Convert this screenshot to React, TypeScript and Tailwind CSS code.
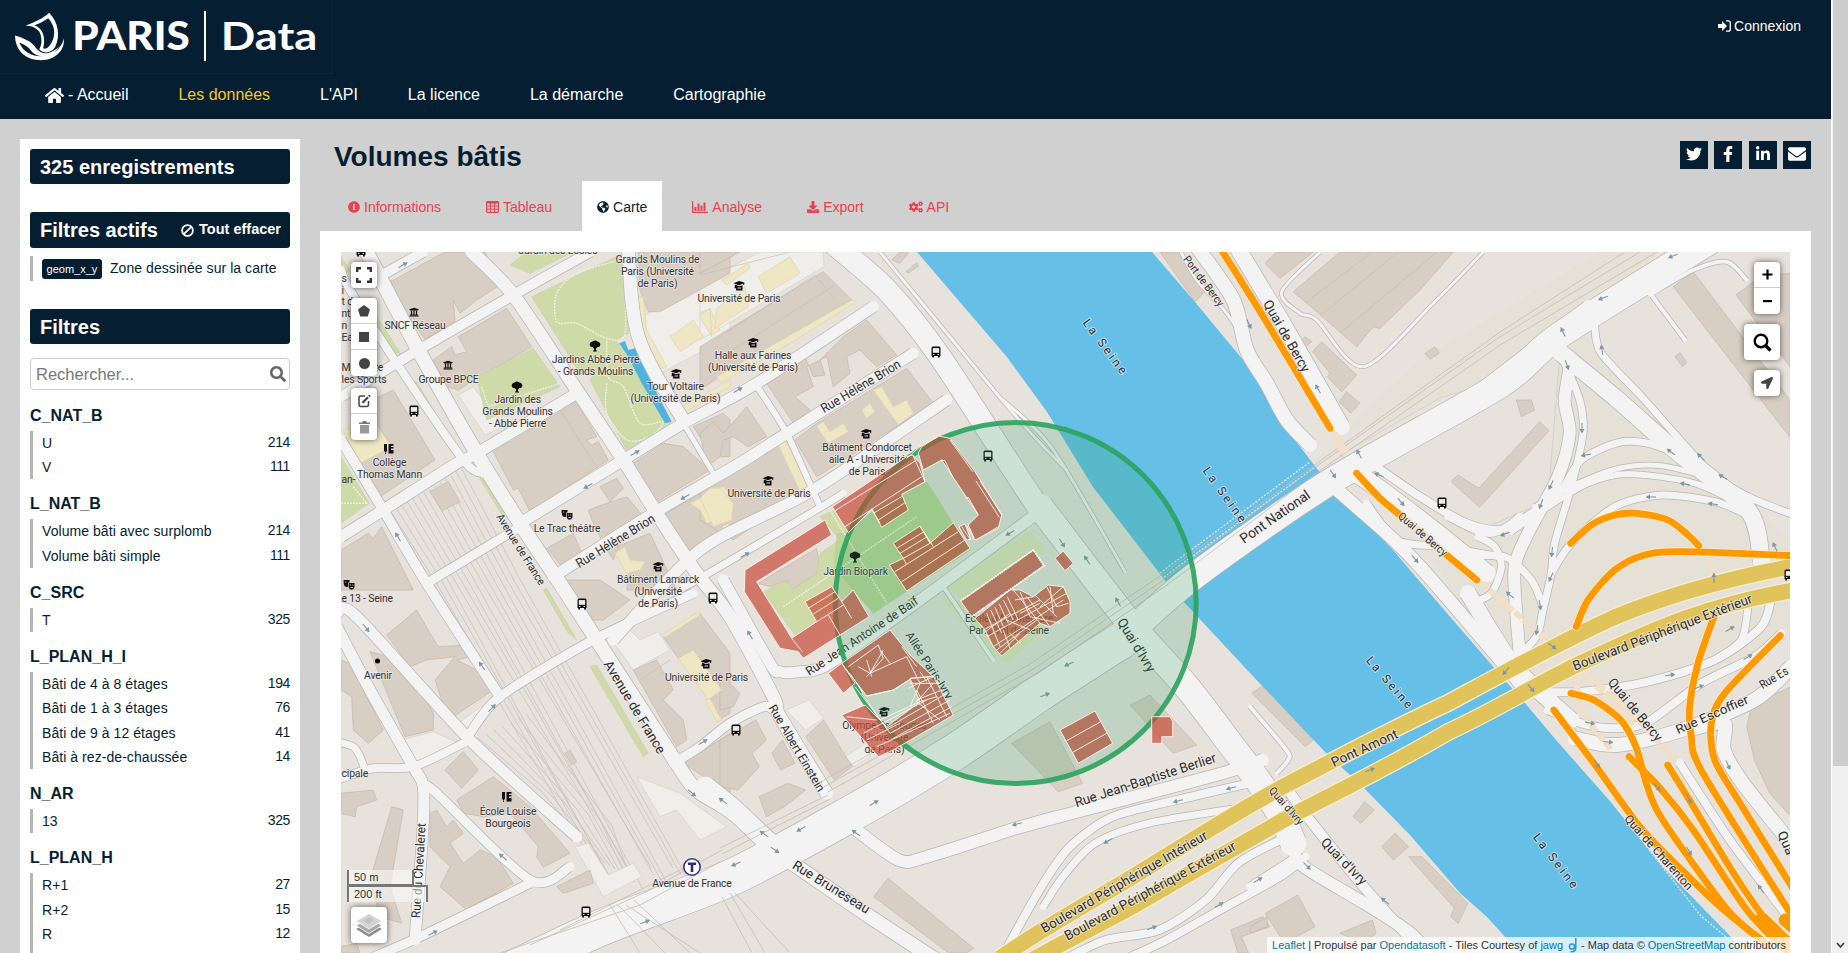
import React from 'react';
import {
  FaHome, FaInfoCircle, FaGlobeAmericas, FaDownload, FaCogs, FaTwitter, FaFacebookF,
  FaLinkedinIn, FaEnvelope, FaLocationArrow, FaSearch, FaUniversity,
} from 'react-icons/fa';

type Pt = [number, number];
type Line = [string, number, string];

/* Survey frames: origin x, origin y, units per pixel in x and y. */
const FRAMES: Record<string, number[]> = {
  a: [330, 240, 3, 3], b: [700, 240, 3, 3], c: [1100, 240, 3, 3], d: [1448, 400, 3, 3],
  e: [330, 580, 3, 3], f: [720, 400, 3, 3], g: [720, 700, 2.8, 3], h: [1250, 650, 2.617, 3],
  k: [1560, 0, 3, 3], p: [0, 0, 1, 1],
};

function pts(frame: string, s: string): Pt[] {
  const [ox, oy, sx, sy] = FRAMES[frame];
  return s.trim().split(/\s+/).map((q) => {
    const [x, y] = q.split(',').map(Number);
    return [+(ox + x / sx).toFixed(1), +(oy + y / sy).toFixed(1)] as Pt;
  });
}
const poly = (frame: string, s: string) => 'M' + pts(frame, s).map((p) => p.join(',')).join('L') + 'Z';
const straight = (frame: string, s: string) => 'M' + pts(frame, s).map((p) => p.join(',')).join('L');
function smooth(frame: string, s: string) {
  const p = pts(frame, s);
  let d = `M${p[0][0]},${p[0][1]}`;
  for (let i = 0; i < p.length - 1; i++) {
    const a = p[Math.max(0, i - 1)], b = p[i], c = p[i + 1], e = p[Math.min(p.length - 1, i + 2)];
    d += `C${b[0] + (c[0] - a[0]) / 7},${b[1] + (c[1] - a[1]) / 7} ${c[0] - (e[0] - b[0]) / 7},${c[1] - (e[1] - b[1]) / 7} ${c[0]},${c[1]}`;
  }
  return d;
}

const RIVER = 'M917,252 1007,357 1047,412 1093,487 1167,583 1182,600 1250,673 1326,753 1363,787 1410,835 1460,893 1487,917 1520,953 1745,953 1731,937 1663,867 1609,800 1556,740 1525,703 1496,670 1427,590 1393,550 1333,488 1318,470 1285,427 1272,395 1195,302 1152,252Z';

const BUILDINGS: [string, string][] = [
  ['a', '160,130 190,120 345,36 465,36 510,135 440,180 390,220 370,180 375,245 285,298'],
  ['a', '310,360 365,320 375,345 410,335 385,290 530,205 605,320 440,415 385,450 350,440'],
  ['a', '490,635 740,485 800,590 770,600 785,615 805,605 835,660 600,815 565,745 550,750'],
  ['a', '95,495 190,450 315,660 150,770 90,665 185,615 130,540'],
  ['a', '300,755 355,725 390,785 335,812'],
  ['a', '33,930 115,880 130,895 155,860 250,1050 33,1050'],
  ['a', '775,810 830,790 890,770 950,840 890,870 850,960 820,910 790,850'],
  ['a', '895,680 1000,610 1060,620 1140,690 975,790 945,740'],
  ['a', '1090,560 1180,520 1200,540 1200,650 1150,650'],
  ['a', '925,36 1200,36 1200,100 990,215 955,215 930,150'],
  ['a', '810,740 860,715 880,745 840,785'],
  ['a', '650,925 730,880 760,950 700,985'],
  ['a', '990,830 1200,710 1200,880 1075,980'],
  ['a', '860,920 960,880 1040,1050 890,1050 900,980'],
  ['b', '0,100 0,36 120,36'],
  ['b', '0,320 370,95 455,180 60,410 0,450'],
  ['b', '200,430 315,350 340,410 375,405 360,360 430,290 500,240 590,345 530,380 480,330 440,350 450,400 400,440 380,350 320,380 340,440 285,470 330,510 280,550'],
  ['b', '285,600 350,550 620,385 700,490 350,710'],
  ['b', '0,730 230,600 330,740 100,900 0,840'],
  ['b', '0,580 40,545 70,580 140,500 200,590 145,620 100,590 70,600 60,650 20,680'],
  ['b', '575,60 600,36 625,40 600,70'], ['b', '618,95 650,68 655,78 625,100'],
  ['c', '580,155 720,36 1060,36 960,150 840,265 820,260 770,320 650,215'],
  ['c', '495,70 530,36 640,36 540,115'],
  ['c', '638,335 665,305 770,405 725,455 682,410 690,400'],
  ['c', '718,485 740,455 780,490 752,520'],
  ['c', '180,36 240,36 330,140 285,185'],
  ['c', '975,340 1005,320 1018,340 990,358'], ['c', '600,305 615,290 635,305 615,322'],
  ['d', '10,245 30,225 92,265 275,65 303,92 95,322'],
  ['d', '205,0 250,0 260,30 220,50'],
  ['k', '340,860 400,815 690,1200 690,1312'],
  ['k', '528,885 575,850 600,830 690,820 690,1100'],
  ['k', '345,1070 360,1058 380,1088 368,1100'],
  ['e', '170,165 260,90 300,160 325,200 415,195 420,230 380,240 480,290 505,320 355,420 315,300 375,230 290,240 240,260'],
  ['e', '120,215 160,225 240,270 310,400 310,450 225,470'],
  ['e', '33,240 60,250 90,310 160,450 115,490 70,450 65,350 33,330'],
  ['e', '345,570 400,515 445,570 395,625'],
  ['e', '380,660 490,590 600,680 720,820 640,862 620,830 625,800 540,700 460,710 400,700'],
  ['e', '120,900 185,680 220,690 180,920 215,1030 150,1010'],
  ['e', '300,700 320,690 350,740 370,720 400,760 360,790 400,850 450,810 500,830 550,910 410,990 330,920 360,860 300,800'],
  ['e', '33,640 130,630 140,660 80,680 75,710 33,700'],
  ['e', '1000,170 1110,100 1200,220 1200,400 1165,420 1140,360 1170,330 1090,210 1045,235'],
  ['e', '910,270 980,240 1030,330 1000,360 1060,420 1070,480 1040,500'],
  ['e', '680,920 780,870 790,910 700,940'],
  ['e', '1060,550 1200,460 1200,640'],
  ['e', '705,520 720,510 740,545 725,555'],
  ['e', '700,0 810,0 900,60 820,120 790,120'],
  ['e', '33,1100 80,1090 90,1119 33,1119'],
  ['g', '430,590 470,535 710,745 690,759 640,759'],
  ['g', '1430,690 1520,650 1540,680 1460,710 1480,759 1450,759'],
  ['g', '0,120 100,60 130,120 90,160 110,200 50,270 0,260'],
  ['g', '110,290 190,250 240,270 180,320 130,350'],
  ['g', '240,110 290,60 370,200 320,240'],
  ['g', '145,160 175,120 210,190 170,210'],
  ['f', '875,1030 990,965 1088,1150 1015,1175'],
  ['f', '1230,915 1290,885 1430,1035 1360,1060'],
  ['f', '115,550 290,445 300,500 290,520 215,570 200,540 150,560'],
  ['f', '0,820 60,880 40,920 0,930'],
  ['h', '5,130 35,105 165,270 145,290'], ['h', '270,500 300,455 325,480 290,520'],
  ['h', '345,590 380,550 415,590 375,630'],
  ['h', '415,620 450,620 570,760 545,820 525,800 535,775'],
  ['h', '40,790 125,735 170,830 90,880'], ['h', '0,830 45,800 45,830 0,850'],
  ['h', '235,850 320,810 330,850 300,880'],
  ['h', '1300,230 1310,180 1340,150 1416,110 1416,500 1360,430 1320,330'],
];
const GREENS: [string, string][] = [
  ['a', '440,410 610,325 690,440 470,540'],
  ['a', '33,650 118,790 33,850'],
  ['a', '605,170 870,45 895,60 895,280 860,300 870,350 750,400'],
  ['a', '820,340 870,310 1022,550 890,630 780,420'],
  ['a', '540,75 590,36 730,36 600,100'],
  ['a', '245,430 260,425 370,610 350,600'], ['a', '440,700 460,700 530,810 520,830'],
  ['a', '125,215 140,230 215,345 180,330'], ['a', '33,50 60,90 55,100 33,75'],
  ['e', '640,30 650,25 740,180 715,160'], ['e', '780,260 800,255 955,520 940,530'],
  ['f', '300,350 345,330 385,398 450,340 620,245 705,370 750,450 460,640 400,570 230,712 130,575 200,540 220,570 290,520 300,460 360,420'],
];
const LAWNS: [string, string][] = [
  ['f', '675,560 930,390 975,450 730,600'], ['f', '660,590 720,600 770,660 1040,560 1060,620 860,790 790,740'],
];
const YELLOWS: [string, string][] = [
  ['a', '40,570 130,540 185,620 90,670'],
  ['a', '1020,290 1090,240 1120,290 1050,335'],
  ['a', '1080,790 1180,740 1200,760 1200,830 1130,850 1110,810'],
  ['a', '1000,830 1075,960 1085,980 1060,980 990,850'],
  ['a', '855,940 885,920 900,960 945,965 930,990 890,1000'],
  ['a', '1020,520 1200,420 1200,440 1030,535'],
  ['a', '1110,220 1140,205 1170,270 1145,285'],
  ['a', '920,170 940,170 950,270 1010,380 985,390 940,290'],
  ['b', '175,110 270,50 300,100 200,160'], ['b', '50,205 135,140 145,200 45,265'],
  ['b', '0,225 30,205 35,290 10,250'], ['b', '65,120 145,70 150,85 80,135'],
  ['b', '485,510 510,490 525,515 500,535'], ['b', '520,450 545,440 580,500 620,480 640,520 595,555'],
  ['b', '350,560 370,545 390,575 430,550 445,575 385,610'],
  ['b', '235,615 255,600 325,740 300,755'], ['b', '0,775 30,745 60,745 100,790 95,840 40,860'],
  ['b', '65,860 85,850 105,885 90,890'], ['b', '455,180 470,185 270,310 60,430 50,410'],
  ['e', '1045,235 1090,210 1175,330 1135,360'], ['e', '995,165 1105,95 1110,105 1005,172'],
  ['e', '1125,360 1140,355 1175,420 1160,425'],
];
const PALE: [string, string][] = [
  ['a', '385,465 430,440 520,560 465,585'],
  ['a', '620,685 690,625 710,655 650,690 655,710 640,715'],
  ['a', '945,225 1200,100 1200,290 990,400 950,300'],
  ['b', '0,130 180,36 370,36 372,80 0,300'],
  ['e', '215,480 310,455 400,495 255,565'], ['e', '385,430 500,345 420,460'],
  ['e', '845,180 890,140 930,180 985,155 1020,210 910,270'],
  ['e', '920,590 1050,640 1190,740 1110,780 1040,690 990,710'],
  ['e', '735,800 775,790 835,885 910,850 935,890 820,950'],
  ['g', '185,30 250,0 290,55 240,90'], ['g', '350,170 410,130 420,170 375,200'],
];

const ROADS: Line[] = [
  ['a', 8, '33,90 60,150 200,370 400,660 460,700'],
  ['a', 14, '110,36 265,330 440,640 570,850 690,1030 820,1230 1040,1570 1100,1650 1180,1700 1320,1800'],
  ['a', 10, '130,120 280,36'], ['a', 10, '33,470 265,330 550,165 780,36'],
  ['a', 13, '425,36 550,165 740,450 880,660 980,820 1100,1000 1200,1130 1330,1370 1350,1430 1490,1660'],
  ['a', 11, '33,890 160,810 380,670 440,640 740,460'],
  ['a', 11, '570,850 880,660 1060,550 1280,430 1630,200'],
  ['a', 11, '670,1010 970,820 1220,675 1370,580 1750,340'],
  ['a', 9, '290,1030 570,860'], ['a', 5, '1060,550 1150,700'], ['b', 6, '165,430 260,580 360,800'],
  ['b', 11, '-260,1200 0,930 340,750 740,480'], ['b', 7, '-50,1040 0,1015 365,800 430,760'],
  ['a', 10, '33,600 160,810 290,1030 510,1370'],
  ['a', 13, '895,20 905,180 925,290 975,400 1060,540'],
  ['e', 9, '420,460 510,350 790,180 1090,40'],
  ['e', 11, '20,100 80,110 420,480 740,770'],
  ['e', 11, '20,140 120,330 250,560 280,620 278,760 255,1080'],
  ['e', 8, '20,600 130,565 250,560 400,490'],
  ['e', 9, '285,620 320,640 600,900 720,860'], ['e', 9, '60,1160 260,1075 600,910'],
  ['e', 7, '20,485 70,500 90,530 105,570'],
  ['e', 9, '1030,550 1110,500 1200,430 1300,380 1330,390'],
  ['g', 14, '160,460 230,510 420,650 620,790'],
  ['g', 20, '-40,260 40,330 140,430 200,470'],
  ['g', 12, '1520,180 1390,225 1000,335 830,385 580,470 500,480 370,380'],
  ['g', 8, '1480,250 1280,300 1100,350 980,440 900,560 790,770'],
  ['g', 7, '1480,320 1200,370 1050,430 960,530 905,620'],
  ['g', 8, '1568,420 1450,490 1360,600 1230,690 1080,720 980,770'],
  ['g', 8, '1640,470 1568,530 1400,630 1250,720 1140,775'],
  ['h', 8, '110,630 0,710'],
  ['h', 4, '0,170 95,300 100,330 70,370'],
  ['f', 11, '10,540 150,790 180,815 240,815 330,790 600,600 945,345'],
  ['f', 4, '670,560 820,780'],
  ['b', 3, '540,36 940,520 1100,690'], ['f', 3, '850,0 1000,150 1215,515'],
  ['b', 3, '420,60 590,150 600,215'],
  ['b', 22, '400,10 560,150 720,350 1000,780 1050,830 1230,1070 1290,1150'],
  ['f', 26, '960,320 1230,670 1400,860 1530,1030 1620,1150 1690,1260 1720,1330'],
  ['h', 12, '60,430 120,560 130,640 300,760 420,850 480,930'],
  ['h', 10, '100,420 150,500 290,700 430,880'],
  ['p', 36, '480,985 600,928 730,878 852,813 953,753 1040,693 1130,635'],
  ['p', 26, '1130,632 1197,574 1333,480 1500,385 1560,335 1720,235'],
  ['p', 20, '1480,395 1590,310'],
  ['c', 14, '290,20 400,180 440,330 500,430 560,540 630,615'],
  ['c', 16, '410,20 560,270 725,560'],
  ['c', 3, '240,30 290,120 380,220 470,360'],
  ['c', 3, '660,36 545,155 600,220 650,240 790,380 1000,190 1150,36'],
  ['c', 8, '800,660 960,770 1100,850 1200,870 1260,830'],
  ['c', 13, '700,740 860,880 960,980 1150,1200 1260,1330'],
  ['c', 18, '740,690 800,720 1000,870 1160,1000'],
  ['c', 7, '800,790 890,900 1020,920 1200,950'],
  ['d', 12, '370,-120 350,0 365,100 330,230 240,400 200,500 205,640 215,760'],
  ['d', 7, '350,-110 395,0 405,100 370,260 320,430 310,520 285,630 265,710 200,780'],
  ['d', 17, '340,-140 510,0 680,150 900,330 940,480'],
  ['d', 7, '440,-220 460,-140 590,0 780,210 900,290 1040,345'],
  ['d', 7, '700,165 600,130 510,128 400,180 340,270 280,320 130,400 0,350'],
  ['d', 5, '760,225 640,197 520,203 390,250 260,320'],
  ['d', 6, '890,320 740,250 540,222 420,250 300,320 190,395'],
  ['d', 7, '900,345 800,305 640,285 500,320 370,430 310,520'],
  ['d', 7, '90,410 140,440 160,500 130,580 70,610'],
  ['d', 7, '60,470 170,470 250,540 285,620'],
  ['k', 4, '270,880 375,1020'], ['k', 4, '270,885 400,810 500,785 560,840'],
  ['d', 8, '260,875 400,875 600,845 800,780 940,680 970,590'],
  ['d', 7, '900,620 880,720 800,780'],
  ['d', 8, '300,930 400,970 500,985 600,965 760,850 920,770 1000,700'],
  ['h', 14, '850,265 960,285 1130,240 1320,150 1416,50'],
  ['h', 14, '1160,235 1240,220 1240,300 1290,400 1430,600'],
  ['h', 8, '1125,340 1250,560 1400,790'],
  ['h', 5, '780,160 850,250'], ['d', 16, '60,580 200,800 370,960'],
];

const PERIPH = [
  'M1000,958 C1040,930 1080,908 1124,882 C1180,848 1230,815 1288,784 C1340,757 1390,730 1448,703 C1500,675 1560,642 1615,617 C1680,590 1740,576 1795,566',
  'M1032,960 C1080,933 1110,920 1149,897 C1200,867 1240,845 1280,822 C1320,800 1380,772 1448,732 C1500,708 1540,682 1581,663 C1640,636 1700,606 1795,590',
];
const ORANGE: Line[] = [
  ['c', 8, '355,15 490,230 690,565'], ['c', 8, '770,700 840,775 900,825'], ['c', 8, '1040,945 1130,1020'],
  ['d', 8, '368,430 430,375 500,345 570,340 660,360 720,405 752,437'],
  ['d', 8, '385,680 420,600 500,510 590,465 700,455 1040,467'],
  ['d', 8, '797,652 750,790 725,920 730,1010 765,1120 1040,1560'],
  ['d', 8, '997,707 830,880 790,970 800,1080 870,1200 1050,1490'],
  ['h', 8, '840,130 900,150 970,210 1010,290 1040,410 1080,510 1250,780 1350,880'],
  ['h', 8, '795,180 900,340 1020,530 1130,660 1240,780 1360,890'],
  ['h', 8, '992,320 1070,410 1160,540 1300,780 1400,900'],
  ['h', 8, '1093,345 1150,450 1260,660 1350,810 1440,920'],
  ['h', 16, '1340,810 1420,900'], ['h', 14, '1400,810 1430,840'],
];
const TUNNELS: Line[] = [
  ['c', 8, '700,580 735,640'], ['c', 8, '900,825 1040,945'], ['d', 6, '100,550 320,740 560,950 680,1080'],
  ['d', 6, '385,820 400,930 490,1050'], ['d', 6, '780,470 797,530'], ['d', 6, '400,810 560,980'],
];

const RED: string[] = [
  '75,510 315,360 335,405 110,545 215,715 290,665 255,605 335,560 365,605 400,570 447,650 250,775 235,755 180,745 73,575',
  '337,320 560,170 578,165 600,190 615,245 545,283 565,330 485,382 455,328 385,398',
  '595,160 605,140 655,108 690,115 765,215 845,345 835,385 765,420 745,375 775,345 665,180 610,210',
  '508,495 550,475 520,430 600,378 630,430 700,368 750,445 560,573',
  '717,380 735,372 752,418 740,420',
  '325,820 365,790 405,850 370,880',
  '365,790 510,690 570,765 640,830 575,835 520,870 440,888',
  '570,835 640,828 700,945 520,1050 475,1070 365,945 435,915 500,980 600,905',
  '722,603 940,450 972,497 755,650',
  '1005,475 1030,453 1060,490 1035,512',
  '765,655 870,570 900,570 940,590 985,555 1030,560 1050,605 1050,640 990,680 960,670 845,768 820,740 795,690',
  '1020,990 1125,933 1178,1030 1075,1090',
  '1295,950 1350,950 1358,965 1358,1010 1325,1010 1325,1030 1295,1030',
];
const RED_LINES = [
  '265,625 345,575', '275,645 355,595', '290,665 370,615', '365,605 395,655', '325,645 360,705', '215,715 247,755',
  '345,332 590,180', '375,380 605,230', '455,325 480,370', '460,340 545,290', '475,360 555,308', '578,165 615,245', '560,175 600,140',
  '600,140 655,110', '690,120 758,215', '768,243 838,352', '780,243 847,345', '735,295 745,292 775,345', '785,410 835,380', '740,378 765,420', '665,180 675,182 700,235', '725,380 752,420',
  '530,445 612,395', '540,460 622,410', '550,475 630,430', '525,515 715,395', '545,545 735,420', '550,475 560,495', '600,378 640,440',
  '385,800 475,735', '475,735 490,775 440,830', '440,780 455,830', '415,800 450,820 490,750', '480,750 510,790', '390,820 430,880', '450,820 560,770',
  '440,888 520,870 575,835', '560,770 600,850', '545,740 590,800', '600,815 620,845', '565,865 640,830', '570,850 660,850', '590,900 665,870', '500,985 680,880', '510,1000 690,900', '520,1015 695,920', '480,960 600,905 650,890', '470,1040 690,940', '430,1000 620,900', '405,860 500,985', '425,880 510,1000', '620,830 680,950', '590,870 640,970', '600,850 570,920', '380,950 470,960', '440,1020 540,970', '640,850 590,905 660,960',
  '800,640 840,740', '812,630 845,700', '825,622 850,680', '838,612 865,670', '850,600 880,660', '862,590 895,660', '790,690 960,600', '800,710 1040,580', '820,740 1030,600', '830,750 950,660', '880,570 960,670', '900,575 930,650', '920,590 990,680', '945,585 1010,650', '980,560 1010,620 1045,610', '960,620 1030,560', '860,660 930,690', '870,700 900,730', '850,690 870,745', '885,600 940,590', '990,560 1000,640', '930,650 1020,670', '900,640 960,610', '790,700 870,640', '840,760 900,700',
  '1040,1022 1142,965', '1058,1057 1160,1000',
];

const RAIL_LINES = [
  'M828,792 1040,672 1167,585 1318,472 1500,345 1657,252', 'M822,788 1035,668 1162,581 1314,468 1498,338 1640,252',
  'M815,785 1030,664 1157,578 1500,332 1625,252', 'M720,848 828,795', 'M722,854 830,799', 'M500,953 640,905 720,862',
  'M530,945 650,890 722,850', 'M560,930 700,860', 'M610,905 640,953', 'M618,905 665,953', 'M626,905 700,953', 'M634,900 690,953', 'M735,893 790,953', 'M730,893 765,953', 'M722,897 752,953',
];
const TRACKS = Array.from({ length: 15 }, (_, i) => {
  const x0 = 386 + i * 5.4, y0 = 516 - i * 3.4;
  const x1 = 428 + i * 6.6, x2 = 596 + i * 6.4 + (i % 3) * 2;
  return `M${x0},${y0} ${x1},580 ${x2},${868 + (i % 4) * 7}`;
});
const SIDINGS = Array.from({ length: 7 }, (_, i) => `M${478 + i * 8},${738 - i * 4} ${540 + i * 12},${790 + i * 6} ${600 + i * 5},${860 + i * 3}`);

const ARROWS: number[][] = [
  [403, 265, -30], [635, 453, -30], [588, 486, 150], [685, 497, 150], [398, 537, -120], [738, 390, -30], [745, 555, -30],
  [1010, 533, 150], [1062, 543, 57], [1087, 560, -123], [1249, 324, 65], [1318, 389, -120], [1359, 454, -120], [1379, 475, 205],
  [1333, 474, 55], [1415, 559, 50], [1582, 428, 90], [1586, 455, 170], [1551, 485, 115], [1541, 504, 110], [1552, 552, 95],
  [1505, 534, 160], [1671, 452, -145], [1701, 457, -135], [1723, 477, -150], [1685, 484, -170], [1651, 497, 180], [1713, 504, -170],
  [1775, 547, -115], [1551, 577, 115], [1510, 595, -140], [1540, 605, 80], [1537, 630, 100], [1730, 629, -30], [1748, 657, -30],
  [1670, 675, -8], [1699, 687, -20], [1590, 723, 10], [1608, 742, 5], [1714, 578, -90], [1552, 646, 35], [1506, 671, 130],
  [1531, 688, 50], [366, 628, 50], [482, 666, -125], [492, 708, -45], [503, 857, -140], [433, 933, -28], [703, 742, -30],
  [692, 793, 40], [723, 801, -145], [645, 922, -20], [750, 635, -120], [1069, 664, 155], [1045, 695, -20], [1118, 602, -120],
  [874, 803, -30], [801, 829, 150], [764, 834, -145], [775, 850, 35], [736, 864, 155], [856, 833, -145], [1017, 824, 165],
  [1231, 788, 165], [1178, 801, 165], [1108, 841, 150], [1219, 905, -30], [1258, 880, -30], [1152, 928, -20], [1370, 770, -20],
  [1307, 866, 45], [1385, 901, -140], [1728, 765, 65], [1761, 889, -125], [1673, 256, 160], [1603, 298, 160], [1563, 332, -115],
  [1602, 350, -100], [1567, 365, 70], [1401, 502, 50], [1597, 764, 60], [1657, 787, 50], [1689, 799, 65], [1689, 851, 60],
];

/* frame, text, font size, baseline start, baseline end */
const STREETS: [string, string, number, string][] = [
  ['b', 'Rue Hélène Brion', 13, '372,520 605,380'], ['a', 'Rue Hélène Brion', 13, '748,985 978,843'],
  ['a', 'Avenue de France', 11, '498,830 628,1038'], ['e', 'Avenue de France', 13.5, '820,252 985,525'],
  ['f', 'Rue Jean Antoine de Baïf', 12.5, '268,828 598,610'], ['f', 'Allée Paris-Ivry', 12, '555,705 680,900'],
  ['f', 'Rue Albert Einstein', 12, '145,923 295,1178'], ['f', "Quai d'Ivry", 13.5, '1190,665 1285,820'],
  ['g', 'Rue Jean-Baptiste Berlier', 13.5, '998,322 1392,185'], ['g', 'Rue Bruneseau', 13.5, '200,503 410,642'],
  ['g', 'Boulevard Périphérique Intérieur', 13.5, '908,700 1368,415'], ['g', 'Boulevard Périphérique Extérieur', 13.5, '973,722 1448,447'],
  ['h', 'Pont Amont', 13.5, '219,352 390,262'], ['c', 'Pont National', 14, '432,912 634,772'],
  ['c', 'Quai de Bercy', 13.5, '488,190 608,400'], ['c', 'Quai de Bercy', 11, '892,832 1030,950'],
  ['c', 'Port de Bercy', 11, '248,58 356,202'], ['h', 'Quai de Bercy', 13.5, '935,98 1063,277'],
  ['h', 'Rue Escoffier', 12.5, '1120,253 1307,158'], ['h', 'Rue Es', 12, '1341,118 1411,70'],
  ['h', 'Quai de Charenton', 12, '978,508 1145,722'], ['h', "Quai d'Ivry", 13.5, '183,580 292,708'],
  ['h', "Quai d'Ivry", 11, '48,423 128,527'], ['h', 'Qua', 13, '1380,550 1405,618'],
  ['e', 'Rue du Chevaleret', 12.5, '270,1015 287,730'],
];
const SEINE: [string, string][] = [
  ['b', '1147,248 1263,405'], ['c', '307,692 421,850'], ['h', '302,32 411,177'], ['h', '739,562 843,717'],
];

const PLACES: [number, number, string[]][] = [
  [558, 254, ['Jardin des Écoles']], [657.5, 263, ['Grands Moulins de', 'Paris (Université', 'de Paris)']],
  [415, 329, ['SNCF Réseau']], [448.5, 382.5, ['Groupe BPCE']], [517.5, 403, ['Jardin des', 'Grands Moulins', '- Abbé Pierre']],
  [595.5, 362.5, ['Jardins Abbé Pierre', '- Grands Moulins']], [675.5, 390, ['Tour Voltaire', '(Université de Paris)']],
  [739, 302, ['Université de Paris']], [753, 359, ['Halle aux Farines', '(Université de Paris)']],
  [389.5, 466, ['Collège', 'Thomas Mann']], [567, 532, ['Le Trac théâtre']],
  [867, 451, ['Bâtiment Condorcet', 'aile A - Université', 'de Paris']], [769, 497, ['Université de Paris']],
  [855.5, 574.5, ['Jardin Biopark']], [658, 583, ['Bâtiment Lamarck', '(Université', 'de Paris)']],
  [706.5, 681, ['Université de Paris']], [378, 678.5, ['Avenir']], [508, 814.5, ['École Louise', 'Bourgeois']],
  [692, 887, ['Avenue de France']],
];
/* Labels that begin at the map's left edge. */
const EDGE: [number, string][] = [
  [282, 's'], [294, 'i'], [305, 't de'], [317, 'nt,'], [329, 'n'], [341, 'Eau'], [370.5, 'Ministère'], [382.5, 'les Sports'],
  [483, 'an-'], [602, 'e 13 - Seine'], [777, 'cipale'],
];
const UNDER: [number, number, string[]][] = [
  [884.5, 728.5, ['Olympe de Gouges', '(Université', 'de Paris)']], [1009, 622, ["École d'Architecture", 'Paris Val de Seine']],
];

function Place({ p }: { p: [number, number, string[]] }) {
  return (
    <text textAnchor="middle" fontSize="10.4" letterSpacing="-0.15" fill="#333338" stroke="#f1eee9" strokeWidth="1.6" strokeOpacity=".75" paintOrder="stroke">
      {p[2].map((t, i) => <tspan key={i} x={p[0]} y={p[1] + i * 12}>{t}</tspan>)}
    </text>
  );
}

function Street({ frame, text, size, ends, wide }: { frame: string; text: string; size: number; ends: string; wide?: boolean }) {
  const [a, b] = pts(frame, ends);
  const len = Math.hypot(b[0] - a[0], b[1] - a[1]);
  const ang = (Math.atan2(b[1] - a[1], b[0] - a[0]) * 180) / Math.PI;
  return (
    <text transform={`translate(${a[0]} ${a[1]}) rotate(${ang})`} fontSize={size} textLength={len}
      lengthAdjust={wide ? 'spacing' : 'spacingAndGlyphs'} fill="#2c2c31" stroke={wide ? '#d5ecf7' : '#f3f0ea'}
      strokeWidth="2" strokeOpacity=".75" paintOrder="stroke">{text}</text>
  );
}

function Bus({ x, y }: { x: number; y: number }) {
  return (
    <g transform={`translate(${x - 5} ${y - 5.5})`}>
      <path d="M2,0H8Q9.5,0 9.5,1.5V9.5H8.8V11H7V9.5H3V11H1.2V9.5H.5V1.5Q.5,0 2,0Z" fill="#0c0c0c" />
      <rect x="1.8" y="1.6" width="6.4" height="4.7" fill="#eee" />
      <rect x="2" y="7.4" width="1.5" height="1" fill="#eee" /><rect x="6.5" y="7.4" width="1.5" height="1" fill="#eee" />
    </g>
  );
}
function School({ x, y }: { x: number; y: number }) {
  return (
    <path transform={`translate(${x - 5} ${y - 5})`} fill="#111" d="M0,0H3V6.5L1.5,9 0,6.5ZM1,7.4H2V10H1ZM4.5,0H9.5V1.8H7V3H9.5V4.6H7V6H9.5V9.5H4.5Z" />
  );
}
function Theatre({ x, y }: { x: number; y: number }) {
  return (
    <g transform={`translate(${x - 5.5} ${y - 5})`}>
      <path d="M0,0H6V2.5H4.5V6.8Q1,7.5 .3,4Z" fill="#111" /><path d="M5.2,3H11V7Q10.3,9.8 8,9.8 5.5,9.6 5.2,7Z" fill="#111" />
      <path d="M1.5,2H2.7M6.4,5H7.6M8.7,5H9.9M6.8,7.5H9.4" stroke="#eee" strokeWidth=".8" />
    </g>
  );
}

function MapDrawing() {
  return (
    <svg className="block h-full w-full" viewBox="341 252 1449 701" fontFamily="Roboto, sans-serif">
      <clipPath id="zone"><circle cx="1015.7" cy="603" r="183" /></clipPath>
      <rect x="341" y="252" width="1449" height="701" fill="#e7e2dc" />
      <path d="M1345,430 1420,360 1600,252 1660,252 1580,330 1640,400 1790,540 1790,640 1560,720 1480,640 1400,500 1500,400Z" fill="#e5e1d7" />
      <path d="M1340,455 1440,398 1500,380 1560,352 1548,500 1480,530 1430,500Z" fill="#e7e3dc" stroke="#cfc8c1" strokeWidth=".7" />
      <g fill="none" stroke="#c9c2bc" strokeWidth=".8">
        {TRACKS.map((d, i) => <path key={i} d={d} />)}
        {SIDINGS.map((d, i) => <path key={i} d={d} />)}
      </g>
      <g fill="#f0eeeb" stroke="#d3ccc6" strokeWidth=".6">{PALE.map(([f, s], i) => <path key={i} d={poly(f, s)} />)}</g>
      <g fill="#d9cec4" stroke="#c4b8ae" strokeWidth=".7">{BUILDINGS.map(([f, s], i) => <path key={i} d={poly(f, s)} />)}</g>
      <g fill="none" stroke="#c9beb5" strokeWidth=".7">
        <path d="M1305,303 1372,252M1320,316 1398,252M1340,333 1437,252M715,340 815,275M730,352 835,285M815,275 835,300M560,410 605,480M700,275 790,252M640,680 670,660" />
      </g>
      <g fill="#efe6c3" stroke="#ddd0ae" strokeWidth=".6">{YELLOWS.map(([f, s], i) => <path key={i} d={poly(f, s)} />)}</g>
      <g fill="#cfdaa9" stroke="#c3cca0" strokeWidth=".5">{GREENS.map(([f, s], i) => <path key={i} d={poly(f, s)} />)}</g>
      <path d={poly('f', '400,570 340,500 350,400 385,398 450,340 620,245 705,370 750,450 460,640')} fill="#a9d18a" fillOpacity=".55" />
      <g fill="#e3e3c0">{LAWNS.map(([f, s], i) => <path key={i} d={poly(f, s)} />)}</g>
      <path d={poly('f', '613,215 665,185 773,345 700,372 620,240')} fill="#e0ddd8" />
      <g fill="none" stroke="#f1f1df" strokeWidth="1.4" strokeDasharray="2 1">
        <path d={smooth('a', '870,60 740,100 680,160 680,245 740,250 830,295 885,280 880,60')} />
        <path d={smooth('a', '830,430 830,520 890,600 960,590 1000,545 930,550 880,440 835,410 830,300')} />
        <path d={straight('a', '455,440 475,500 690,430')} /><path d={straight('a', '33,790 110,790 70,740')} />
        <path d={straight('f', '190,620 590,350')} /><path d={straight('f', '330,330 500,610')} />
      </g>
      <path d={RIVER} fill="#66bfe7" />
      <g fill="none" stroke="#e8e4df" strokeWidth="1.4" strokeDasharray="2 1.6">
        <path d="M1160,573 1310,462M1164,577 1315,467" /><path d="M1609,798 1700,915 1745,953" /><path d="M1462,615 1500,668" />
      </g>
      <g fill="none" stroke="#b9b6b8" strokeLinejoin="round" strokeLinecap="butt">
        {ROADS.map(([f, w, s], i) => <path key={i} d={smooth(f, s)} strokeWidth={w + 1.5} />)}
      </g>
      <g fill="none" stroke="#f4f3f3" strokeLinejoin="round" strokeLinecap="round">
        {ROADS.map(([f, w, s], i) => <path key={i} d={smooth(f, s)} strokeWidth={w} />)}
      </g>
      <path d={poly('a', '868,310 885,303 895,330 915,325 925,350 1025,545 1005,550 935,430 895,350')} fill="#4fb2e0" />
      <g fill="none" stroke="#c4bdb4" strokeWidth=".8">
        {RAIL_LINES.map((d, i) => <path key={i} d={d} />)}
      </g>
      <g fill="none" stroke="#f2dfc6">
        {TUNNELS.map(([f, w, s], i) => <path key={i} d={smooth(f, s)} strokeWidth={w} strokeDasharray={i > 1 ? '9 2' : undefined} />)}
      </g>
      {PERIPH.map((d, i) => <path key={i} d={d} fill="none" stroke="#f7efd2" strokeWidth="18" />)}
      {PERIPH.map((d, i) => <path key={i} d={d} fill="none" stroke="#e1c35c" strokeWidth="15.5" />)}
      <g fill="none" strokeLinecap="round" strokeLinejoin="round">
        {ORANGE.map(([f, w, s], i) => <path key={i} d={smooth(f, s)} stroke="#fdebc4" strokeWidth={w} />)}
        {ORANGE.map(([f, w, s], i) => <path key={i} d={smooth(f, s)} stroke="#ff9900" strokeWidth={w - 1.2} />)}
      </g>
      <g stroke="#8097a1" fill="#8097a1" strokeWidth="1.1">
        {ARROWS.map(([x, y, a], i) => (
          <g key={i} transform={`translate(${x} ${y}) rotate(${a})`}><path d="M-5,0H3" /><path d="M5.5,0 1,-2.6V2.6Z" stroke="none" /></g>
        ))}
      </g>
      {STREETS.map(([f, t, z, s], i) => <Street key={i} frame={f} text={t} size={z} ends={s} />)}
      <Street frame="d" text="Boulevard Périphérique Extérieur" size={13.5} ends="380,812 916,607" />
      {SEINE.map(([f, s], i) => <Street key={i} frame={f} text="La Seine" size={12} ends={s} wide />)}
      {PLACES.map((p, i) => <Place key={i} p={p} />)}
      <g fontSize="10.4" letterSpacing="-0.15" fill="#333338">
        {EDGE.map(([y, t]) => <text key={y} x="341.5" y={y}>{t}</text>)}
      </g>
      {UNDER.map((p, i) => <Place key={i} p={p} />)}
      <g color="#111">
        {[[414, 312], [448, 365]].map(([x, y]) => <FaUniversity key={x} x={x - 5} y={y - 5} size={10} />)}
        {[[595, 346], [517, 387], [855, 557]].map(([x, y]) => (
          <path key={x} transform={`translate(${x - 5.5} ${y - 5.5})`} fill="#0c0c0c" d="M3,1Q5.5,-.8 8,1Q11,1.5 10.8,4.5Q10.5,7 8,6.5L6.4,8V10H7.5V11H3.5V10H4.600V8L3,6.500Q.5,7 .2,4.500Q0,1.800 3,1Z" />
        ))}
        {[[676, 374], [739, 286], [753, 343], [866, 434], [768, 481], [658, 567], [706, 664], [884, 712]].map(([x, y]) => (
          <g key={x} transform={`translate(${x - 5.5} ${y - 5})`} fill="#0c0c0c">
            <path d="M0,2.2 5.5,0 11,1.6 10.6,4H9.8L9.700,2.600 5.500,4.200Z" />
            <path d="M1.500,3.600 5.500,5.200 9,4.200V9.400H2.600V7.200H1Z" />
            <path d="M4,7H7.500" stroke="#ddd" strokeWidth="1" />
          </g>
        ))}
        {[[389, 449], [507, 797]].map(([x, y]) => <School key={x} x={x} y={y} />)}
        {[[567, 515], [349, 585]].map(([x, y]) => <Theatre key={x} x={x} y={y} />)}
        {[[361, 251], [414, 411], [936, 352], [988, 456], [582, 604], [713, 598], [736, 730], [586, 912], [1442, 503], [1789, 575]].map(([x, y]) => <Bus key={x} x={x} y={y} />)}
        <circle cx="377.5" cy="661" r="2.5" />
        <circle cx="692" cy="867" r="8.2" fill="#fff" stroke="#3a3189" strokeWidth="1.6" />
        <path d="M688,862.5H696V865H693.3V872H690.7V865H688Z" fill="#2f2f6b" />
      </g>
      <circle cx="1015.7" cy="603" r="180.5" fill="#2ca25f" fillOpacity=".2" stroke="#2ca25f" strokeOpacity=".9" strokeWidth="5" />
      <g fill="#c94b39" fillOpacity=".7">{RED.map((s, i) => <path key={i} d={poly('f', s)} />)}</g>
      <g fill="#2c8a4f" fillOpacity=".12" clipPath="url(#zone)">{RED.map((s, i) => <path key={i} d={poly('f', s)} />)}</g>
      <g fill="none" stroke="#fff6ef" strokeWidth=".9">
        {RED.map((s, i) => <path key={i} d={poly('f', s)} />)}
        {RED_LINES.map((s, i) => <path key={i} d={straight('f', s)} />)}
      </g>
      <g fill="none" stroke="#fff" strokeWidth="1.8" strokeDasharray="1.5 1"><path d={straight('f', '722,603 940,450 972,497 755,650')} /></g>
    </svg>
  );
}

const GROUPS: [string, [string, number][]][] = [
  ['C_NAT_B', [['U', 214], ['V', 111]]],
  ['L_NAT_B', [['Volume bâti avec surplomb', 214], ['Volume bâti simple', 111]]],
  ['C_SRC', [['T', 325]]],
  ['L_PLAN_H_I', [['Bâti de 4 à 8 étages', 194], ['Bâti de 1 à 3 étages', 76], ['Bâti de 9 à 12 étages', 41], ['Bâti à rez-de-chaussée', 14]]],
  ['N_AR', [['13', 325]]],
  ['L_PLAN_H', [['R+1', 27], ['R+2', 15], ['R', 12]]],
];

const SignIn = () => (
  <svg width="13" height="12" viewBox="0 0 13 12"><path d="M0,4H4V1L9,6 4,11V8H0Z" fill="#fff" /><path d="M8,.8H10.300Q12.300,.8 12.300,2.800V9.200Q12.300,11.200 10.300,11.200H8" fill="none" stroke="#fff" strokeWidth="1.300" /></svg>
);
const TableIcon = () => (
  <svg width="13" height="12" viewBox="0 0 13 12" fill="none" stroke="currentColor"><rect x=".6" y=".6" width="11.8" height="10.8" rx=".8" strokeWidth="1.1" /><path d="M.5,1.5H12.5" strokeWidth="1.8" /><path d="M.5,5H12.5M.5,8.2H12.5M4.5,1V11M8.500,1V11" /></svg>
);
const ChartIcon = () => (
  <svg width="16" height="12" viewBox="0 0 16 12" fill="none" stroke="currentColor"><path d="M.6,0V11.4H16" strokeWidth="1.2" /><path d="M3.5,10V6M6.5,10V2.5M9.5,10V4.5M12.5,10V1.5" strokeWidth="2" /></svg>
);
const Ban = () => (
  <svg width="13" height="13" viewBox="0 0 13 13" fill="none" stroke="#fff" strokeWidth="1.8"><circle cx="6.5" cy="6.5" r="5.4" /><path d="M2.8,10.2 10.2,2.8" /></svg>
);

const TABS: [string, React.ReactNode, boolean][] = [
  ['Informations', <FaInfoCircle size={12} />, false], ['Tableau', <TableIcon />, false],
  ['Carte', <FaGlobeAmericas size={12} />, true], ['Analyse', <ChartIcon />, false],
  ['Export', <FaDownload size={12} />, false], ['API', <FaCogs size={14} />, false],
];

const ctl = 'absolute rounded-[4px] bg-white shadow-[0_0_6px_rgba(0,0,0,0.6)] flex flex-col items-center';
const cell = 'flex h-[26px] w-[26px] items-center justify-center';

export default function App() {
  return (
    <div className="flex h-[953px] w-[1848px] overflow-hidden bg-[#d0d0d0] font-['Liberation_Sans',Arial,sans-serif] text-[14px] text-[#061e31]">
      <div className="flex w-[1831px] flex-col">
        <header className="flex h-[119px] shrink-0 flex-col bg-[#061e31] text-white">
          <div className="flex h-[74px] items-start justify-between">
            <svg className="h-[74px] w-[333px] border-r border-b border-[#0c2539]" viewBox="0 0 333 74" fill="#fff" fontFamily="Lato, 'Open Sans', sans-serif">
              <path d="M48,13 C57,22 60,36 54,48 C50,54 43,55 38,50 C41,45 41,38 38,32 C34,27 29,26 24,26 C32,23 42,19 48,13Z M47,18.500 C42,22 38,24 33,25.500 C41,28 45,37 42,49 C46,51 50,45 52,40 C55,31 52,24 47,18.500Z" fillRule="evenodd" />
              <path d="M13.500,36 C18,37 22,39 26,41 C31,43 33,47 37,51 C43,57 53,53 59,46 C52,58 39,60 31,53 C28,48 23,45 18,43 C21,52 30,57 40,57 C51,57 60,50 63,39 C64,53 52,61 40,61 C24,61 13.500,51 13.500,36Z" />
              <text x="71.500" y="51" fontSize="40" fontWeight="900" textLength="119" lengthAdjust="spacingAndGlyphs">PARIS</text>
              <rect x="205" y="11" width="2" height="51" />
              <text x="222" y="51" fontSize="39" fontWeight="700" textLength="98" lengthAdjust="spacingAndGlyphs">Data</text>
            </svg>
            <div className="mt-[17px] mr-[30px] flex items-center gap-[3px] text-[14px] leading-[18px]"><SignIn />Connexion</div>
          </div>
          <nav className="flex h-[42px] items-center pl-[45px] text-[16px] whitespace-nowrap">
            <span className="mr-[50px] flex items-center gap-[4px]"><FaHome size={19} />- Accueil</span>
            <span className="mr-[50px] text-[#f5c72c]">Les données</span>
            <span className="mr-[50px]">L'API</span>
            <span className="mr-[50px]">La licence</span>
            <span className="mr-[50px]">La démarche</span>
            <span>Cartographie</span>
          </nav>
        </header>
        <div className="flex pl-[20px] pt-[20px]">
          <aside className="flex h-[814px] w-[280px] shrink-0 flex-col overflow-hidden bg-white px-[10px] pt-[10px]">
            <div className="flex h-[35px] shrink-0 items-center rounded-[3px] bg-[#061e31] pl-[10px] text-[20px] font-bold text-white">325 enregistrements</div>
            <div className="mt-[28px] flex h-[36px] shrink-0 items-center justify-between rounded-[3px] bg-[#061e31] pr-[9px] pl-[10px] text-[20px] font-bold text-white">
              Filtres actifs
              <span className="flex items-center gap-[5px] text-[14.5px]"><Ban />Tout effacer</span>
            </div>
            <div className="mt-[8px] flex h-[25px] shrink-0 items-center border-l-[3px] border-[#b4b4b4] pl-[9px] whitespace-nowrap">
              <span className="mt-[1px] mr-[8px] flex h-[20px] w-[60px] items-center justify-center rounded-[3px] bg-[#061e31] text-[11px] text-white">geom_x_y</span>
              <span className="tracking-[0.06px]">Zone dessinée sur la carte</span>
            </div>
            <div className="mt-[28px] flex h-[35px] shrink-0 items-center rounded-[3px] bg-[#061e31] pl-[10px] text-[20px] font-bold text-white">Filtres</div>
            <div className="mt-[14px] flex h-[32px] shrink-0 items-center justify-between rounded-[4px] border border-[#ccc] pr-[3px] pl-[5px] text-[16.5px] text-[#777]">
              Rechercher...<FaSearch size={16} color="#666" />
            </div>
            <div className="mt-[1px] flex grow flex-col">
              {GROUPS.map(([name, rows], g) => (
                <section key={name} className={g === GROUPS.length - 1 ? 'flex grow flex-col' : ''}>
                  <h3 className="h-[39.6px] pt-[16px] text-[16px] leading-[18px] font-bold">{name}</h3>
                  <div className="grow border-l-[3px] border-[#b4b4b4] pl-[9px]">
                    {rows.map(([label, count]) => (
                      <div key={label} className="flex h-[24.45px] items-center justify-between pt-[1px]">
                        <span className="tracking-[0.06px]">{label}</span><span className="-mt-[2px] tracking-[-0.4px]">{count}</span>
                      </div>
                    ))}
                  </div>
                </section>
              ))}
            </div>
          </aside>
          <main className="ml-[20px] flex w-[1491px] flex-col">
            <div className="flex h-[42px] justify-between pl-[14px]">
              <h1 className="pt-[1px] text-[28px] leading-[34px] font-bold">Volumes bâtis</h1>
              <div className="mt-[2px] flex gap-[6.3px] text-white">
                {[FaTwitter, FaFacebookF, FaLinkedinIn, FaEnvelope].map((Icon, i) => (
                  <span key={i} className="flex h-[28px] w-[28px] items-center justify-center bg-[#061e31] pb-[2px]"><Icon size={i === 3 ? 18 : 16} /></span>
                ))}
              </div>
            </div>
            <div className="flex h-[50px] gap-[15px] pl-[13px]">
              {TABS.map(([label, icon, active]) => (
                <div key={label} className={active ? 'flex items-center gap-[4px] bg-white px-[15px] pt-[2px]' : 'flex items-center gap-[4px] px-[15px] pt-[2px] text-[#e8414f]'}>{icon}{label}</div>
              ))}
            </div>
            <div className="h-[722px] bg-white pt-[21px] pl-[21px]">
              <div className="relative h-[701px] w-[1449px] overflow-hidden">
                <MapDrawing />
                <div className={`${ctl} top-[10px] left-[10px]`}>
                  <div className={cell}><svg width="16" height="16" viewBox="0 0 16 16" fill="none" stroke="#333" strokeWidth="2.4"><path d="M1.2,5V1.2H5M11,1.2H14.8V5M14.8,11V14.8H11M5,14.8H1.2V11" /></svg></div>
                </div>
                <div className={`${ctl} top-[46px] left-[10px]`}>
                  <div className={`${cell} border-b border-[#ccc]`}><svg width="12" height="12" viewBox="0 0 12 12" fill="#444"><path d="M6,0 12,4.5 9.8,11.5H2.2L0,4.5Z" /></svg></div>
                  <div className={`${cell} border-b border-[#ccc]`}><div className="h-[10px] w-[10px] bg-[#444]" /></div>
                  <div className={cell}><div className="h-[11px] w-[11px] rounded-full bg-[#444]" /></div>
                </div>
                <div className={`${ctl} top-[136px] left-[10px]`}>
                  <div className={`${cell} border-b border-[#ccc]`}><svg width="14" height="14" viewBox="0 0 14 14" fill="none" stroke="#444" strokeWidth="1.5"><path d="M8,2H4Q2,2 2,4V10.5Q2,12.5 4,12.5H9.5Q11.5,12.5 11.5,10.5V7" /><path d="M5.5,8.8 11,3.2" strokeWidth="2.2" /><path d="M11.8,2.4 13,1.2" strokeWidth="2.2" /></svg></div>
                  <div className={cell}><svg width="11" height="13" viewBox="0 0 11 13" fill="#999"><path d="M1,4H10V12.5H1Z" /><path d="M0,1.5H3.5V0H7.5V1.5H11V3H0Z" fill="#777" /></svg></div>
                </div>
                <div className={`${ctl} top-[10px] right-[10px]`}>
                  <div className={`${cell} border-b border-[#ccc]`}><svg width="11" height="11" viewBox="0 0 11 11" stroke="#000" strokeWidth="2.2"><path d="M.5,5.5H10.5M5.5,.5V10.5" /></svg></div>
                  <div className={cell}><svg width="9" height="3" viewBox="0 0 9 3"><rect width="9" height="2.2" /></svg></div>
                </div>
                <div className={`${ctl} top-[72px] right-[10px] h-[36px] w-[36px] justify-center`}>
                  <svg width="19" height="19" viewBox="0 0 19 19" fill="none" stroke="#000"><circle cx="8" cy="8" r="6.3" strokeWidth="2.4" /><path d="M12.5,12.5 17.5,17.5" strokeWidth="3.2" /></svg>
                </div>
                <div className={`${ctl} top-[118px] right-[10px]`}><div className={cell}><FaLocationArrow size={12} color="#444" /></div></div>
                <div className="absolute top-[618px] left-[6px] text-[11px] leading-[15px] text-[#333]">
                  <div className="h-[16px] w-[67px] border-x-2 border-b-2 border-[#777] bg-white/50 pl-[5px]">50 m</div>
                  <div className="-mt-[1px] h-[17px] w-[81px] border-x-2 border-t-2 border-[#777] bg-white/50 pl-[5px]">200 ft</div>
                </div>
                <div className={`${ctl} top-[655px] left-[10px] h-[36px] w-[36px] justify-center`}>
                  <svg width="26" height="26" viewBox="0 0 26 26"><path d="M0,17 13,10 26,17 13,25Z" fill="#8f8f8f" /><path d="M0,13.5 13,6.5 26,13.5 13,21.5Z" fill="#aaa" stroke="#fff" strokeWidth=".8" /><path d="M0,9 13,1.5 26,9 13,17Z" fill="#d4d4d4" stroke="#fff" strokeWidth=".8" /><path d="M7,8.5 13,5 18,8 12,12Z" fill="#c2c2c2" /></svg>
                </div>
                <div className="absolute right-0 bottom-0 flex h-[16px] items-center justify-center bg-white/75 pr-[4px] pl-[5px] text-[11px] whitespace-pre text-[#333]">
                  <span className="text-[#0078a8]">Leaflet</span> | Propulsé par <span className="text-[#0078a8]">Opendatasoft</span> - Tiles Courtesy of <span className="text-[#0078a8]">jawg</span>
                  <svg className="mr-[4px] ml-[5px]" width="9" height="15" viewBox="0 0 9 15" fill="none" stroke="#2196e3" strokeWidth="1.5"><circle cx="4" cy="8.5" r="2.6" /><path d="M7.8,0V10Q7.5,14 2.5,13.800" /></svg>
                  {' '}- Map data © <span className="text-[#0078a8]">OpenStreetMap</span> contributors
                </div>
              </div>
            </div>
          </main>
        </div>
      </div>
      <div className="flex w-[17px] flex-col items-center justify-between border-l border-white bg-[#f0f0f0]">
        <div className="h-[766px] w-[15px] bg-[#cdcdcd]" />
        <svg className="mb-[4px]" width="9" height="7" viewBox="0 0 9 7" fill="none" stroke="#444" strokeWidth="1.8"><path d="M1,1 4.5,5 8,1" /></svg>
      </div>
    </div>
  );
}
